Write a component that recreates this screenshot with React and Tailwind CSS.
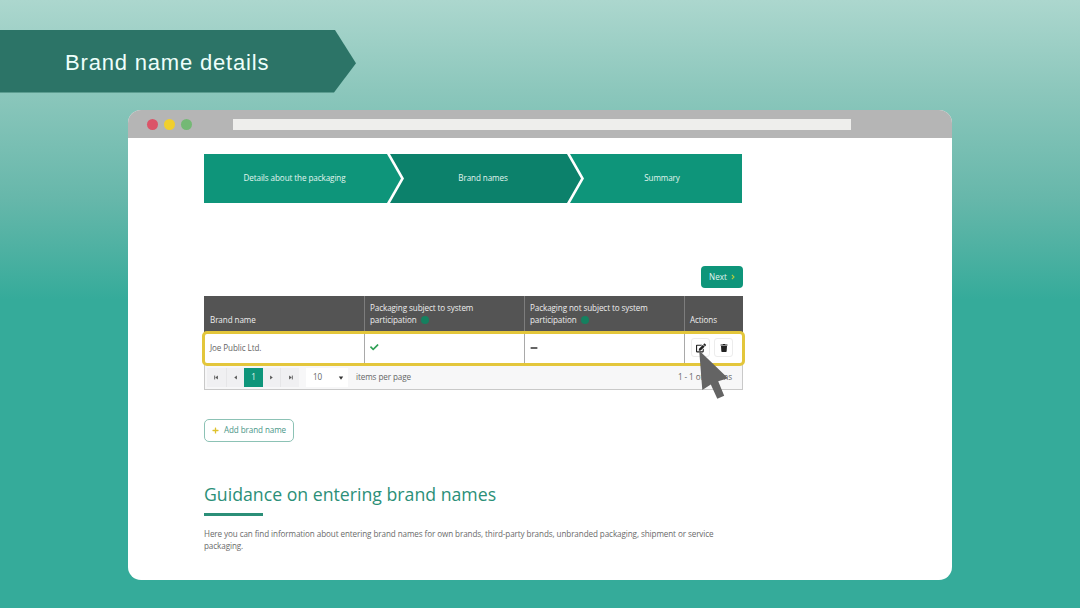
import {FaCheck, FaMinus, FaPlus, FaTrash, FaEdit} from "react-icons/fa";

const steps = [
  {
    text: "Details about the packaging",
    className:
      "w-[198px] pr-[17px] bg-[#0e957a] [clip-path:polygon(0_0,183px_0,197px_50%,183px_100%,0_100%)]",
  },
  {
    text: "Brand names",
    className:
      "w-[191px] -ml-[12px] pr-[5px] bg-[#0c816b] [clip-path:polygon(0_0,177px_0,100%_50%,177px_100%,0_100%,14px_50%)]",
  },
  {
    text: "Summary",
    className:
      "w-[172px] -ml-[11px] pl-[12px] bg-[#0e957a] [clip-path:polygon(0_0,100%_0,100%_100%,0_100%,14px_50%)]",
  },
];

const columns = [
  { name: "Brand name", key: "brand" },
  { name: "Packaging subject to system participation", key: "subject", info: true },
  { name: "Packaging not subject to system participation", key: "not_subject", info: true },
  { name: "Actions", key: "actions" },
];

const gridColumns = "grid grid-cols-[160px_160px_160px_59px]";

const ArrowIcon = ({ flip, bar }) => (
  <svg viewBox="0 0 8 8" className={flip ? "size-[7px] rotate-180" : "size-[7px]"}>
    <path d="M5.6 1.8v4.4L2.6 4z" fill="#555" />
    {bar && <path d="M1.9 1.8v4.4" stroke="#555" strokeWidth="1" />}
  </svg>
);

const StepBar = () => (
  <div className="flex h-[49px] w-[538px]">
    {steps.map((step) => (
      <div
        key={step.text}
        className={`flex shrink-0 items-center justify-center text-[8.1px] tracking-[-0.09px] text-[#e2f6f0] ${step.className}`}
      >
        {step.text}
      </div>
    ))}
  </div>
);

const Pager = () => (
  <div className="flex h-[25px] items-center border border-t-0 border-[#c9c9c9] bg-[#f7f7f8] pt-px pl-[2px] text-[#666]">
    <div className="flex h-[19px]">
      <button className="flex w-[19px] items-center justify-center bg-[#f0f0f2]">
        <ArrowIcon bar />
      </button>
      <button className="flex w-[18px] items-center justify-center border-l border-[#e6e6e8] bg-[#f0f0f2]">
        <ArrowIcon />
      </button>
      <button className="flex w-[19px] items-center justify-center bg-[#0e957a] text-[#e2f6f0]">
        1
      </button>
      <button className="flex w-[18px] items-center justify-center border-r border-[#e6e6e8] bg-[#f0f0f2]">
        <ArrowIcon flip />
      </button>
      <button className="flex w-[18px] items-center justify-center bg-[#f0f0f2]">
        <ArrowIcon flip bar />
      </button>
    </div>
    <div className="ml-[7px] flex h-[19px] w-[42px] items-center justify-between bg-white pr-[4px] pl-[7px]">
      <span>10</span>
      <svg viewBox="0 0 6 6" className="size-[6px]">
        <path d="M.8 1.5h4.4L3 4.8z" fill="#333" />
      </svg>
    </div>
    <span className="ml-[8px]">items per page</span>
    <span className="mr-[10px] ml-auto">1 - 1 of 1 items</span>
  </div>
);

const BrandTable = () => (
  <div className="mt-[8px] w-[539px] text-[8.1px] tracking-[-0.09px]">
    <div className={`${gridColumns} h-[36px] bg-[#545454] leading-[12px] text-[#eee]`}>
      {columns.map((column, index) => (
        <div
          key={column.key}
          className={
            index === 0
              ? "flex items-end pb-[6px] pl-[6px]"
              : "flex items-end border-l border-[#7d7d7d] pb-[6px] pl-[5px]"
          }
        >
          <span className={column.info ? "w-[130px]" : ""}>
            {column.name}
            {column.info && (
              <span className="ml-[4px] inline-block size-[8px] rounded-full bg-[#15805f] align-[-1px]" />
            )}
          </span>
        </div>
      ))}
    </div>
    <div className="relative">
      <div className={`${gridColumns} h-[33px] items-stretch text-[#666]`}>
        <div className="flex items-center pb-px pl-[6px]">Joe Public Ltd.</div>
        <div className="flex items-center border-l border-[#a9a9a9] pb-[2px] pl-[5px]">
          <FaCheck className="size-[8.5px] text-[#2fa055]" />
        </div>
        <div className="flex items-center border-l border-[#a9a9a9] pb-[2px] pl-[5px]">
          <FaMinus className="size-[8px] text-[#333]" />
        </div>
        <div className="flex items-center gap-[4px] border-l border-[#a9a9a9] pb-[2px] pl-[6px]">
          <button className="flex size-[19px] items-center justify-center rounded-[3px] border border-[#ececec]">
            <FaEdit className="size-[10px] text-[#222]" />
          </button>
          <button className="flex size-[19px] items-center justify-center rounded-[3px] border border-[#ececec]">
            <FaTrash className="size-[8px] text-[#222]" />
          </button>
        </div>
      </div>
      {/* highlighted row */}
      <div className="absolute -top-px -right-[2px] -bottom-px -left-[2px] rounded-[5px] border-3 border-[#e3c63b]" />
      <svg viewBox="0 0 32 52" className="absolute top-[17px] left-[494px] z-10 h-[52px] w-[32px]">
        <path d="M1.2 1.5L30 29.3L20.2 32.2L26.2 46.8L19.3 49.7L12.8 35.5L4.3 41z" fill="#646464" />
      </svg>
    </div>
    <Pager />
  </div>
);

const App = () => {
  return (
    <div className="h-[608px] w-[1080px] overflow-hidden bg-[linear-gradient(180deg,#acd7ce_0px,#8cc7bc_90px,#66b7aa_200px,#35ab9a_300px)] pt-[30px]">
      <div className="flex h-[62.5px] w-[356px] items-center bg-[#2c7467] pl-[65px] font-['Liberation_Sans',sans-serif] text-[22px] tracking-[0.82px] text-[#eefffb] [clip-path:polygon(0_0,335px_0,100%_53%,334px_100%,0_100%)]">
        <h1 className="pt-[3px] whitespace-nowrap">Brand name details</h1>
      </div>

      <div className="mt-[17.5px] ml-[128px] h-[470px] w-[824px] overflow-hidden rounded-[13px] bg-white font-['Open_Sans',sans-serif]">
        <div className="flex h-[28px] items-center bg-[#b5b5b5] pl-[19px]">
          <div className="flex gap-[6px]">
            <span className="size-[11px] rounded-full bg-[#db5468]" />
            <span className="size-[11px] rounded-full bg-[#f0cf2e]" />
            <span className="size-[11px] rounded-full bg-[#74b975]" />
          </div>
          <div className="ml-[41px] h-[11px] w-[618px] bg-[#eeeeec]" />
        </div>

        <div className="w-[615px] pt-[16px] pl-[76px]">
          <StepBar />

          <div className="mt-[63px] flex justify-end">
            <button className="flex h-[22px] w-[42px] items-center justify-center gap-[4px] rounded-[4px] bg-[#0e957a] text-[8.1px] text-[#e2f6f0]">
              Next
              <svg viewBox="0 0 4 6" className="h-[6px] w-[4px]">
                <path d="M.9 .9L3 3L.9 5.1" fill="none" stroke="#b6cf3c" strokeWidth="1.1" />
              </svg>
            </button>
          </div>

          <BrandTable />

          <button className="mt-[29px] flex h-[23px] w-[90px] items-center justify-center gap-[5px] rounded-[5px] border border-[#8cc2b5] text-[8.1px] tracking-[-0.09px] whitespace-nowrap text-[#4a9687]">
            <FaPlus className="size-[7px] text-[#dfc12c]" />
            Add brand name
          </button>

          <h2 className="mt-[40px] text-[17.7px] leading-[24px] whitespace-nowrap text-[#2b8f78]">
            Guidance on entering brand names
          </h2>
          <div className="mt-[7px] h-[3px] w-[59px] bg-[#2b8f78]" />
          <p className="mt-[12px] text-[8.1px] leading-[12px] tracking-[-0.09px] whitespace-nowrap text-[#6a6a6a]">
            Here you can find information about entering brand names for own brands, third-party brands, unbranded packaging, shipment or service
            <br />
            packaging.
          </p>
        </div>
      </div>
    </div>
  );
};

export default App;
